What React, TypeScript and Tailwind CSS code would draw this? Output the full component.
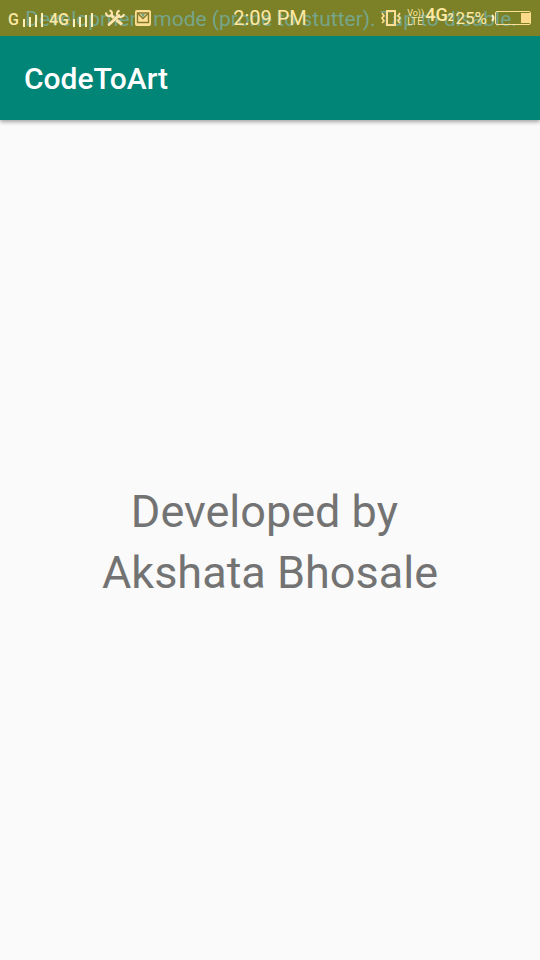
function SignalBars() {
  return (
    <svg width="20" height="14" viewBox="0 0 20 14" fill="#fff0b8" aria-hidden="true">
      <rect x="0" y="6" width="2" height="8" />
      <rect x="6" y="4" width="2" height="10" />
      <rect x="12" y="2" width="2" height="12" />
      <rect x="18" y="0" width="2" height="14" />
    </svg>
  );
}

function ToolsIcon() {
  return (
    <svg width="20" height="18" viewBox="0 0 20 18" fill="none" stroke="#ffe6ae" aria-hidden="true">
      <path d="M5.5 5.5 L9 9 M11.5 11 L17 15.5" strokeWidth="3" />
      <path d="M14 6.5 L4 15.5" strokeWidth="2.8" strokeLinecap="round" />
      <path d="M1 3.5 Q1 7 4 7 Q7 7 7 4 Q7 2 4.5 1.5" strokeWidth="2" />
      <path d="M14.5 1.5 Q11.5 3 12 5.5 Q13 8.5 16 8 Q18.5 7.5 19 5" strokeWidth="2" />
    </svg>
  );
}

function MailIcon() {
  return (
    <svg width="16" height="16" viewBox="0 0 16 16" fill="none" aria-hidden="true">
      <rect width="16" height="16" rx="2" fill="#ffdf91" />
      <path d="M2.5 3 H13.5 V12.5 H2.5 Z" stroke="#827b30" strokeWidth="1.4" />
      <path d="M3 3.5 L8 8.5 L13 3.5" stroke="#827b30" strokeWidth="1.4" />
      <path d="M6 4 H10 L8 7.5 Z" fill="#76a58a" />
    </svg>
  );
}

function VibrateIcon() {
  return (
    <svg width="20" height="18" viewBox="0 0 20 18" fill="none" stroke="#ffdf91" aria-hidden="true">
      <rect x="6" y="2" width="8" height="14" strokeWidth="2" />
      <path d="M1 4 L3 7 L1 9 L3 12 L1 14 M19 4 L17 7 L19 9 L17 12 L19 14" strokeWidth="1.6" />
    </svg>
  );
}

function BatteryIcon() {
  return (
    <svg width="41" height="16" viewBox="0 0 41 16" fill="none" aria-hidden="true">
      <path d="M1 5 Q4 8 1 11" stroke="#fff0c8" strokeWidth="2" />
      <rect x="4.5" y="1.5" width="35" height="13" rx="1.5" stroke="#ffdf91" />
      <rect x="30" y="3" width="9" height="10" fill="#ffd98a" />
    </svg>
  );
}

function StatusBar() {
  return (
    <div className="relative h-9 overflow-hidden bg-[#7c8026] text-[#ffe9a3]">
      <p className="absolute inset-x-0 top-0 pt-px pl-0.5 text-center text-[21px] leading-9 whitespace-nowrap text-[#76a58a]">
        Development mode (prone to stutter). Tap to disable.
      </p>
      <div className="relative grid h-9 grid-cols-[1fr_auto_1fr] items-center px-2">
        <div className="flex items-center">
          <div className="flex items-center gap-1 pt-1">
            <span className="text-base leading-4 font-medium">G</span>
            <SignalBars />
          </div>
          <div className="ml-1.5 flex items-center gap-1 pt-1">
            <span className="text-base leading-4 font-medium">4G</span>
            <SignalBars />
          </div>
          <div className="ml-3 flex items-center gap-2.5">
            <ToolsIcon />
            <MailIcon />
          </div>
        </div>
        <time className="text-xl leading-9">2:09 PM</time>
        <div className="flex items-center justify-end">
          <VibrateIcon />
          <div className="mr-0.5 ml-1.5 flex flex-col">
            <span className="h-2 w-4 text-[9px] leading-2">Vo))</span>
            <span className="text-[10px] leading-2.5">LTE</span>
          </div>
          <span className="flex items-baseline pb-1 text-lg leading-6 font-medium">
            4G<span className="text-[10px] font-bold">2</span>
          </span>
          <span className="mr-1 ml-0.5 text-[17px] leading-6">25%</span>
          <BatteryIcon />
        </div>
      </div>
    </div>
  );
}

export default function App() {
  return (
    <div className="flex min-h-screen flex-col bg-[#fafafa] font-['Roboto',sans-serif]">
      <StatusBar />
      <header className="flex h-21 items-center bg-[#008577] px-6 pt-0.5 shadow-[0_2px_4px_rgba(0,0,0,0.35)]">
        <h1 className="text-[30px] leading-9 font-medium text-white">CodeToArt</h1>
      </header>
      <main className="flex grow items-center justify-center pt-1">
        <p className="text-center text-[45px] leading-[61px] whitespace-pre text-[#737373]">
          {"Developed by \nAkshata Bhosale"}
        </p>
      </main>
    </div>
  );
}
